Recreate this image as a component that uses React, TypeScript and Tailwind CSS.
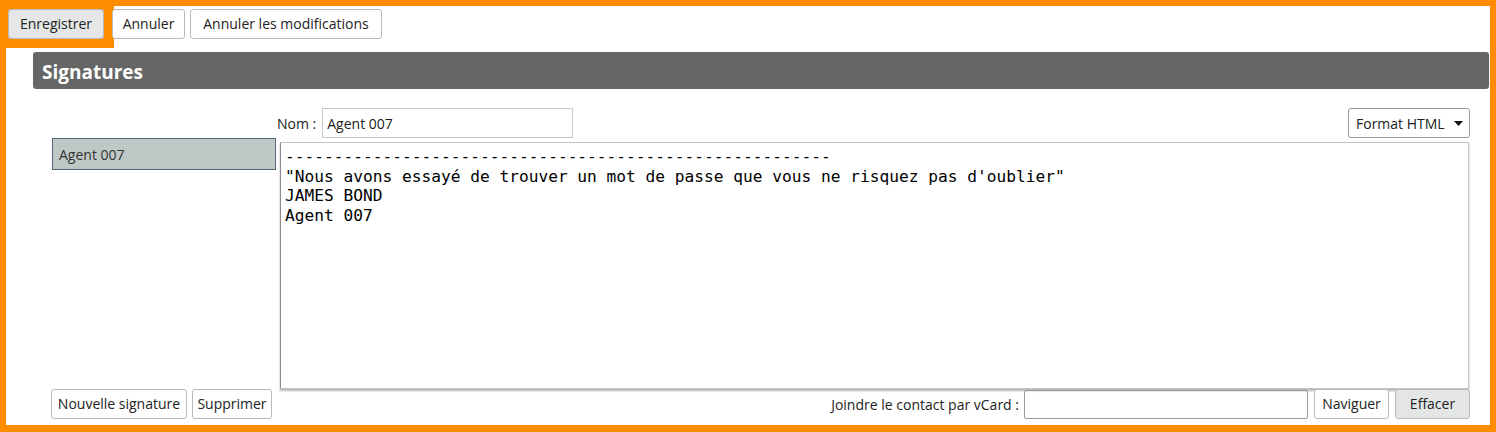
import React from 'react';

const ui = { fontFamily: '"Open Sans", "Noto Sans", Arial, sans-serif' };
const mono = { fontFamily: '"DejaVu Sans Mono", "Liberation Mono", monospace' };

const btn =
  'h-[30px] flex items-center justify-center border border-[#b9b9b9] rounded-[3px] text-[14px] text-[#222] leading-none';

export default function App() {
  const dashes = '-'.repeat(56);

  return (
    <div
      className="w-[1496px] h-[432px] border-[6px] border-b-[7px] border-[#ff8c00] bg-white flex flex-col overflow-hidden"
      style={ui}
    >
      {/* barre d'actions */}
      <div className="flex items-start">
        <div className="bg-[#ff8c00] pl-[2px] pt-[3px] pr-[10px] pb-[9px]">
          <button className={`${btn} w-[96px] bg-[#e4e7e6]`}>Enregistrer</button>
        </div>
        <button className={`${btn} w-[73px] mt-[3px] bg-white -ml-[2px]`}>Annuler</button>
        <button className={`${btn} w-[192px] mt-[3px] ml-[5px] bg-white`}>Annuler les modifications</button>
      </div>

      <div className="ml-[27px] mr-[1px] mt-[4px] h-[37px] bg-[#666666] rounded-[3px] flex items-center pl-[9px] pt-[3px]">
        <h2 className="text-white font-bold text-[19px]">Signatures</h2>
      </div>

      <div className="flex pl-[46px] mt-[19px]">
        {/* liste */}
        <div className="w-[224px] flex flex-col">
          <div className="h-[30px]" />
          <div className="h-[32px] bg-[#bec9c6] border border-[#52697c] flex items-center pl-[6px] text-[14px] text-[#333]">
            Agent 007
          </div>
        </div>

        {/* édition */}
        <div className="w-[1194px] flex flex-col">
          <div className="h-[30px] flex items-center">
            <span className="ml-[1px] text-[14px] text-[#222]">Nom :</span>
            <input
              defaultValue="Agent 007"
              className="ml-[6px] w-[251px] h-[30px] border border-[#c8c8c8] px-[4px] text-[14px] text-[#222] outline-none"
              style={ui}
            />
            <div className="ml-auto w-[122px] h-[30px] border border-[#9a9a9a] rounded-[3px] flex items-center pl-[7px] text-[14px] text-[#222]">
              Format HTML
              <svg width="9" height="5" viewBox="0 0 9 5" className="ml-auto mr-[6px]">
                <path d="M0 0h9L4.5 5z" fill="#111" />
              </svg>
            </div>
          </div>
          <div className="ml-[4px] mt-[4px] w-[1189px] h-[247px] border border-[#c4c4c4] border-l-[#8a8a8a] shadow-[0_2px_2px_rgba(0,0,0,0.3)] pt-[4px] pl-[4px]">
            <div className="text-[16.2px] leading-[19.7px] text-black whitespace-pre" style={mono}>
              {dashes}
              {'\n"Nous avons essayé de trouver un mot de passe que vous ne risquez pas d\'oublier"'}
              {'\nJAMES BOND'}
              {'\nAgent 007'}
            </div>
          </div>
        </div>
      </div>

      {/* bas de page */}
      <div className="flex items-center pl-[45px]">
        <button className={`${btn} w-[136px] h-[29px] bg-white`}>Nouvelle signature</button>
        <button className={`${btn} w-[80px] h-[29px] ml-[5px] bg-white`}>Supprimer</button>
        <span className="ml-auto text-[14px] text-[#222]">Joindre le contact par vCard :</span>
        <input className="ml-[5px] w-[284px] h-[29px] border border-[#9a9a9a] rounded-[2px] outline-none" />
        <button className={`${btn} w-[75px] h-[29px] ml-[6px] bg-white`}>Naviguer</button>
        <button className={`${btn} w-[75px] h-[29px] ml-[6px] mr-[20px] bg-[#e3e6e5]`}>Effacer</button>
      </div>
    </div>
  );
}
